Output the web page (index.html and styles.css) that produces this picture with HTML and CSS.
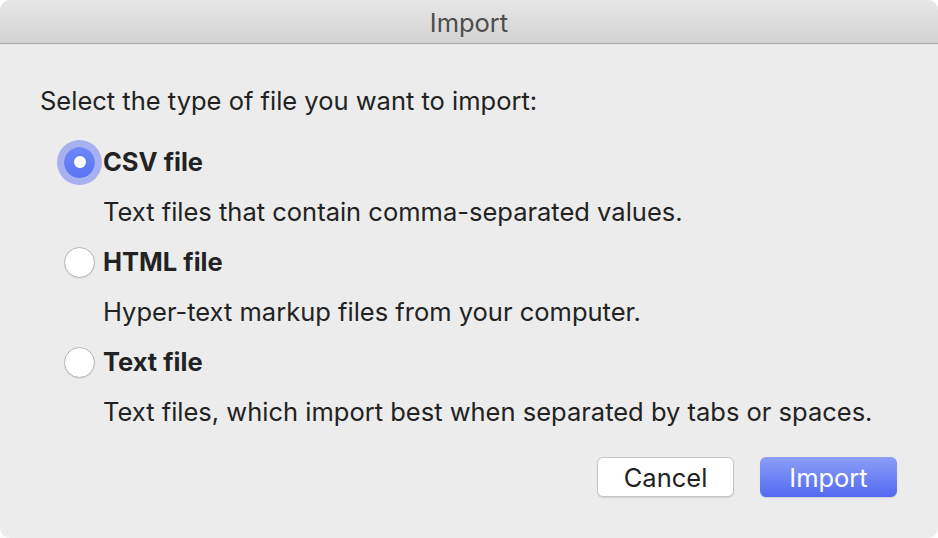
FILE: index.html
```html
<!DOCTYPE html>
<html lang="en">
<head>
    <meta charset="UTF-8">
    <title>Import</title>
    <link rel="stylesheet" href="styles.css">
</head>
<body>
    <div class="window">
        <div class="titlebar">Import</div>
        <div class="content">
            <p class="prompt">Select the type of file you want to import:</p>

            <div class="options">
                <label class="option">
                    <span class="radio checked"></span>
                    <span class="option-title">CSV file</span>
                    <span class="option-desc">Text files that contain comma-separated values.</span>
                </label>
                <label class="option">
                    <span class="radio"></span>
                    <span class="option-title">HTML file</span>
                    <span class="option-desc">Hyper-text markup files from your computer.</span>
                </label>
                <label class="option">
                    <span class="radio"></span>
                    <span class="option-title">Text file</span>
                    <span class="option-desc">Text files, which import best when separated by tabs or spaces.</span>
                </label>
            </div>

            <div class="actions">
                <button class="button">Cancel</button>
                <button class="button primary">Import</button>
            </div>
        </div>
    </div>
</body>
</html>
```

FILE: styles.css
```css
body {
    margin: 0;
    background: #ffffff;
    font-family: Inter, "Noto Sans", sans-serif;
    color: #222222;
}
.window {
    width: 938px;
    height: 538px;
    border-radius: 10px;
    overflow: hidden;
    background: #ececec;
}
.titlebar {
    height: 40px;
    padding-top: 3px;
    line-height: 40px;
    border-bottom: 1px solid #a9a9a9;
    background: linear-gradient(#e7e7e7, #d2d2d2);
    text-align: center;
    font-size: 25.5px;
    color: #4d4d4d;
}
.content {
    padding: 0 41px 0 40px;
}
.prompt {
    margin: 40px 0 0;
    font-size: 25.5px;
    line-height: 34px;
}
.options {
    margin-top: 27px;
}
.option {
    display: grid;
    grid-template-columns: 63px 1fr;
    align-items: center;
    height: 100px;
    align-content: start;
}
.radio {
    justify-self: end;
    margin-right: 8px;
    width: 31px;
    height: 31px;
    border-radius: 50%;
    background: #ffffff;
    border: 1px solid #b5b5b5;
    box-sizing: border-box;
    box-shadow: 0 1px 1px rgba(0, 0, 0, 0.06);
}
.radio.checked {
    position: relative;
    border: none;
    background: linear-gradient(#6e88f9, #5a73f3);
    box-shadow: 0 0 0 7px #a7b1f0;
}
.radio.checked::after {
    content: "";
    position: absolute;
    left: 9.5px;
    top: 9.5px;
    width: 12px;
    height: 12px;
    border-radius: 50%;
    background: #ffffff;
}
.option-title {
    font-size: 25.5px;
    font-weight: 700;
    line-height: 34px;
}
.option-desc {
    grid-column: 2;
    margin-top: 16px;
    font-size: 25.5px;
    line-height: 34px;
}
.actions {
    display: flex;
    justify-content: flex-end;
    gap: 26px;
    margin-top: 12px;
}
.button {
    width: 137px;
    height: 40px;
    border-radius: 6px;
    border: 1px solid #c6c6c6;
    background: #ffffff;
    font-family: Inter, "Noto Sans", sans-serif;
    font-size: 25.5px;
    color: #222222;
    box-shadow: 0 1px 1px rgba(0, 0, 0, 0.12);
    padding: 0;
}
.button.primary {
    border: none;
    background: linear-gradient(#8b9ff8, #5369f1);
    color: #ffffff;
}
```
